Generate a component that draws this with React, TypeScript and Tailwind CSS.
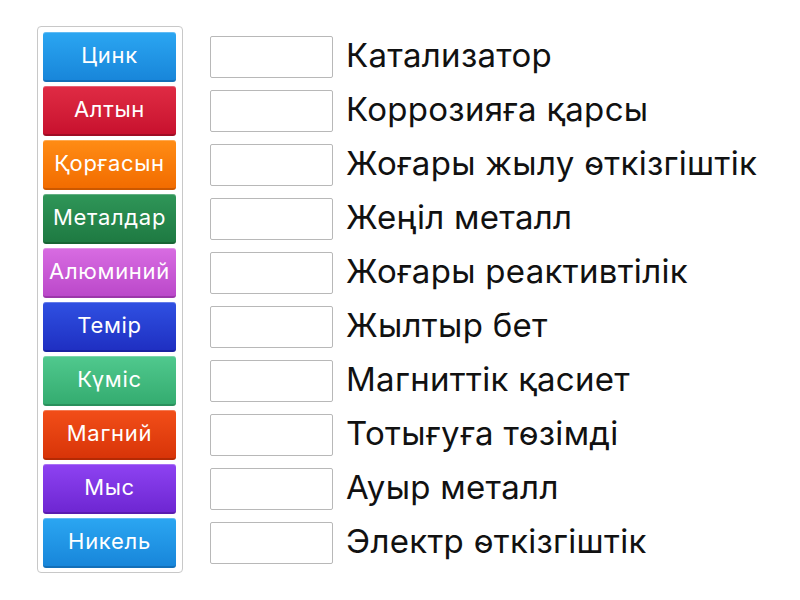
import React from 'react';

const items = [
  { label: 'Цинк', cls: 'from-[#2ba6f2] to-[#1886da] border-b-[#136fb8]' },
  { label: 'Алтын', cls: 'from-[#e02b44] to-[#c8102e] border-b-[#a00c24]' },
  { label: 'Қорғасын', cls: 'from-[#ff8c14] to-[#f26c00] border-b-[#cc5800]' },
  { label: 'Металдар', cls: 'from-[#2f9658] to-[#1e7a42] border-b-[#186434]' },
  { label: 'Алюминий', cls: 'from-[#d86ce2] to-[#bb48ca] border-b-[#9c36aa]' },
  { label: 'Темір', cls: 'from-[#3050e2] to-[#1f2fc2] border-b-[#1822a0]' },
  { label: 'Күміс', cls: 'from-[#50c98e] to-[#34ac70] border-b-[#2a905c]' },
  { label: 'Магний', cls: 'from-[#f24e18] to-[#d83408] border-b-[#b42a04]' },
  { label: 'Мыс', cls: 'from-[#8e42f2] to-[#6e26d2] border-b-[#5a1cb0]' },
  { label: 'Никель', cls: 'from-[#2ba6f2] to-[#1886da] border-b-[#136fb8]' },
];

const targets = [
  'Катализатор',
  'Коррозияға қарсы',
  'Жоғары жылу өткізгіштік',
  'Жеңіл металл',
  'Жоғары реактивтілік',
  'Жылтыр бет',
  'Магниттік қасиет',
  'Тотығуға төзімді',
  'Ауыр металл',
  'Электр өткізгіштік',
];

export default function App() {
  return (
    <div className="w-[800px] h-[600px] bg-white flex items-start pt-[26px] pl-[37px]" style={{ fontFamily: 'Inter, "Liberation Sans", Arial, sans-serif' }}>
      {/* word bank */}
      <div className="w-[146px] border border-[#c8c8c8] rounded-[4px] pt-[5px] pb-[4px] pl-[5px] pr-[6px] flex flex-col gap-[4px] bg-white">
        {items.map((it) => (
          <div
            key={it.label}
            className={`h-[50px] w-[133px] rounded-[3px] bg-gradient-to-b border-b-2 border-transparent ${it.cls} flex items-center justify-center pb-[2px] text-white text-[22px] tracking-[0.7px] whitespace-nowrap shadow-[inset_0_1px_0_rgba(255,255,255,0.25)]`}
          >
            {it.label}
          </div>
        ))}
      </div>

      {/* targets */}
      <div className="ml-[27px] pt-[6px] flex flex-col gap-[4px]">
        {targets.map((t) => (
          <div key={t} className="h-[50px] flex items-center">
            <div className="w-[123px] h-[42px] border border-[#b8b8b8] rounded-[2px] bg-white" />
            <span className="ml-[13px] text-[33px] tracking-[0.3px] text-[#111] leading-none -mt-[3px] whitespace-nowrap">{t}</span>
          </div>
        ))}
      </div>
    </div>
  );
}
